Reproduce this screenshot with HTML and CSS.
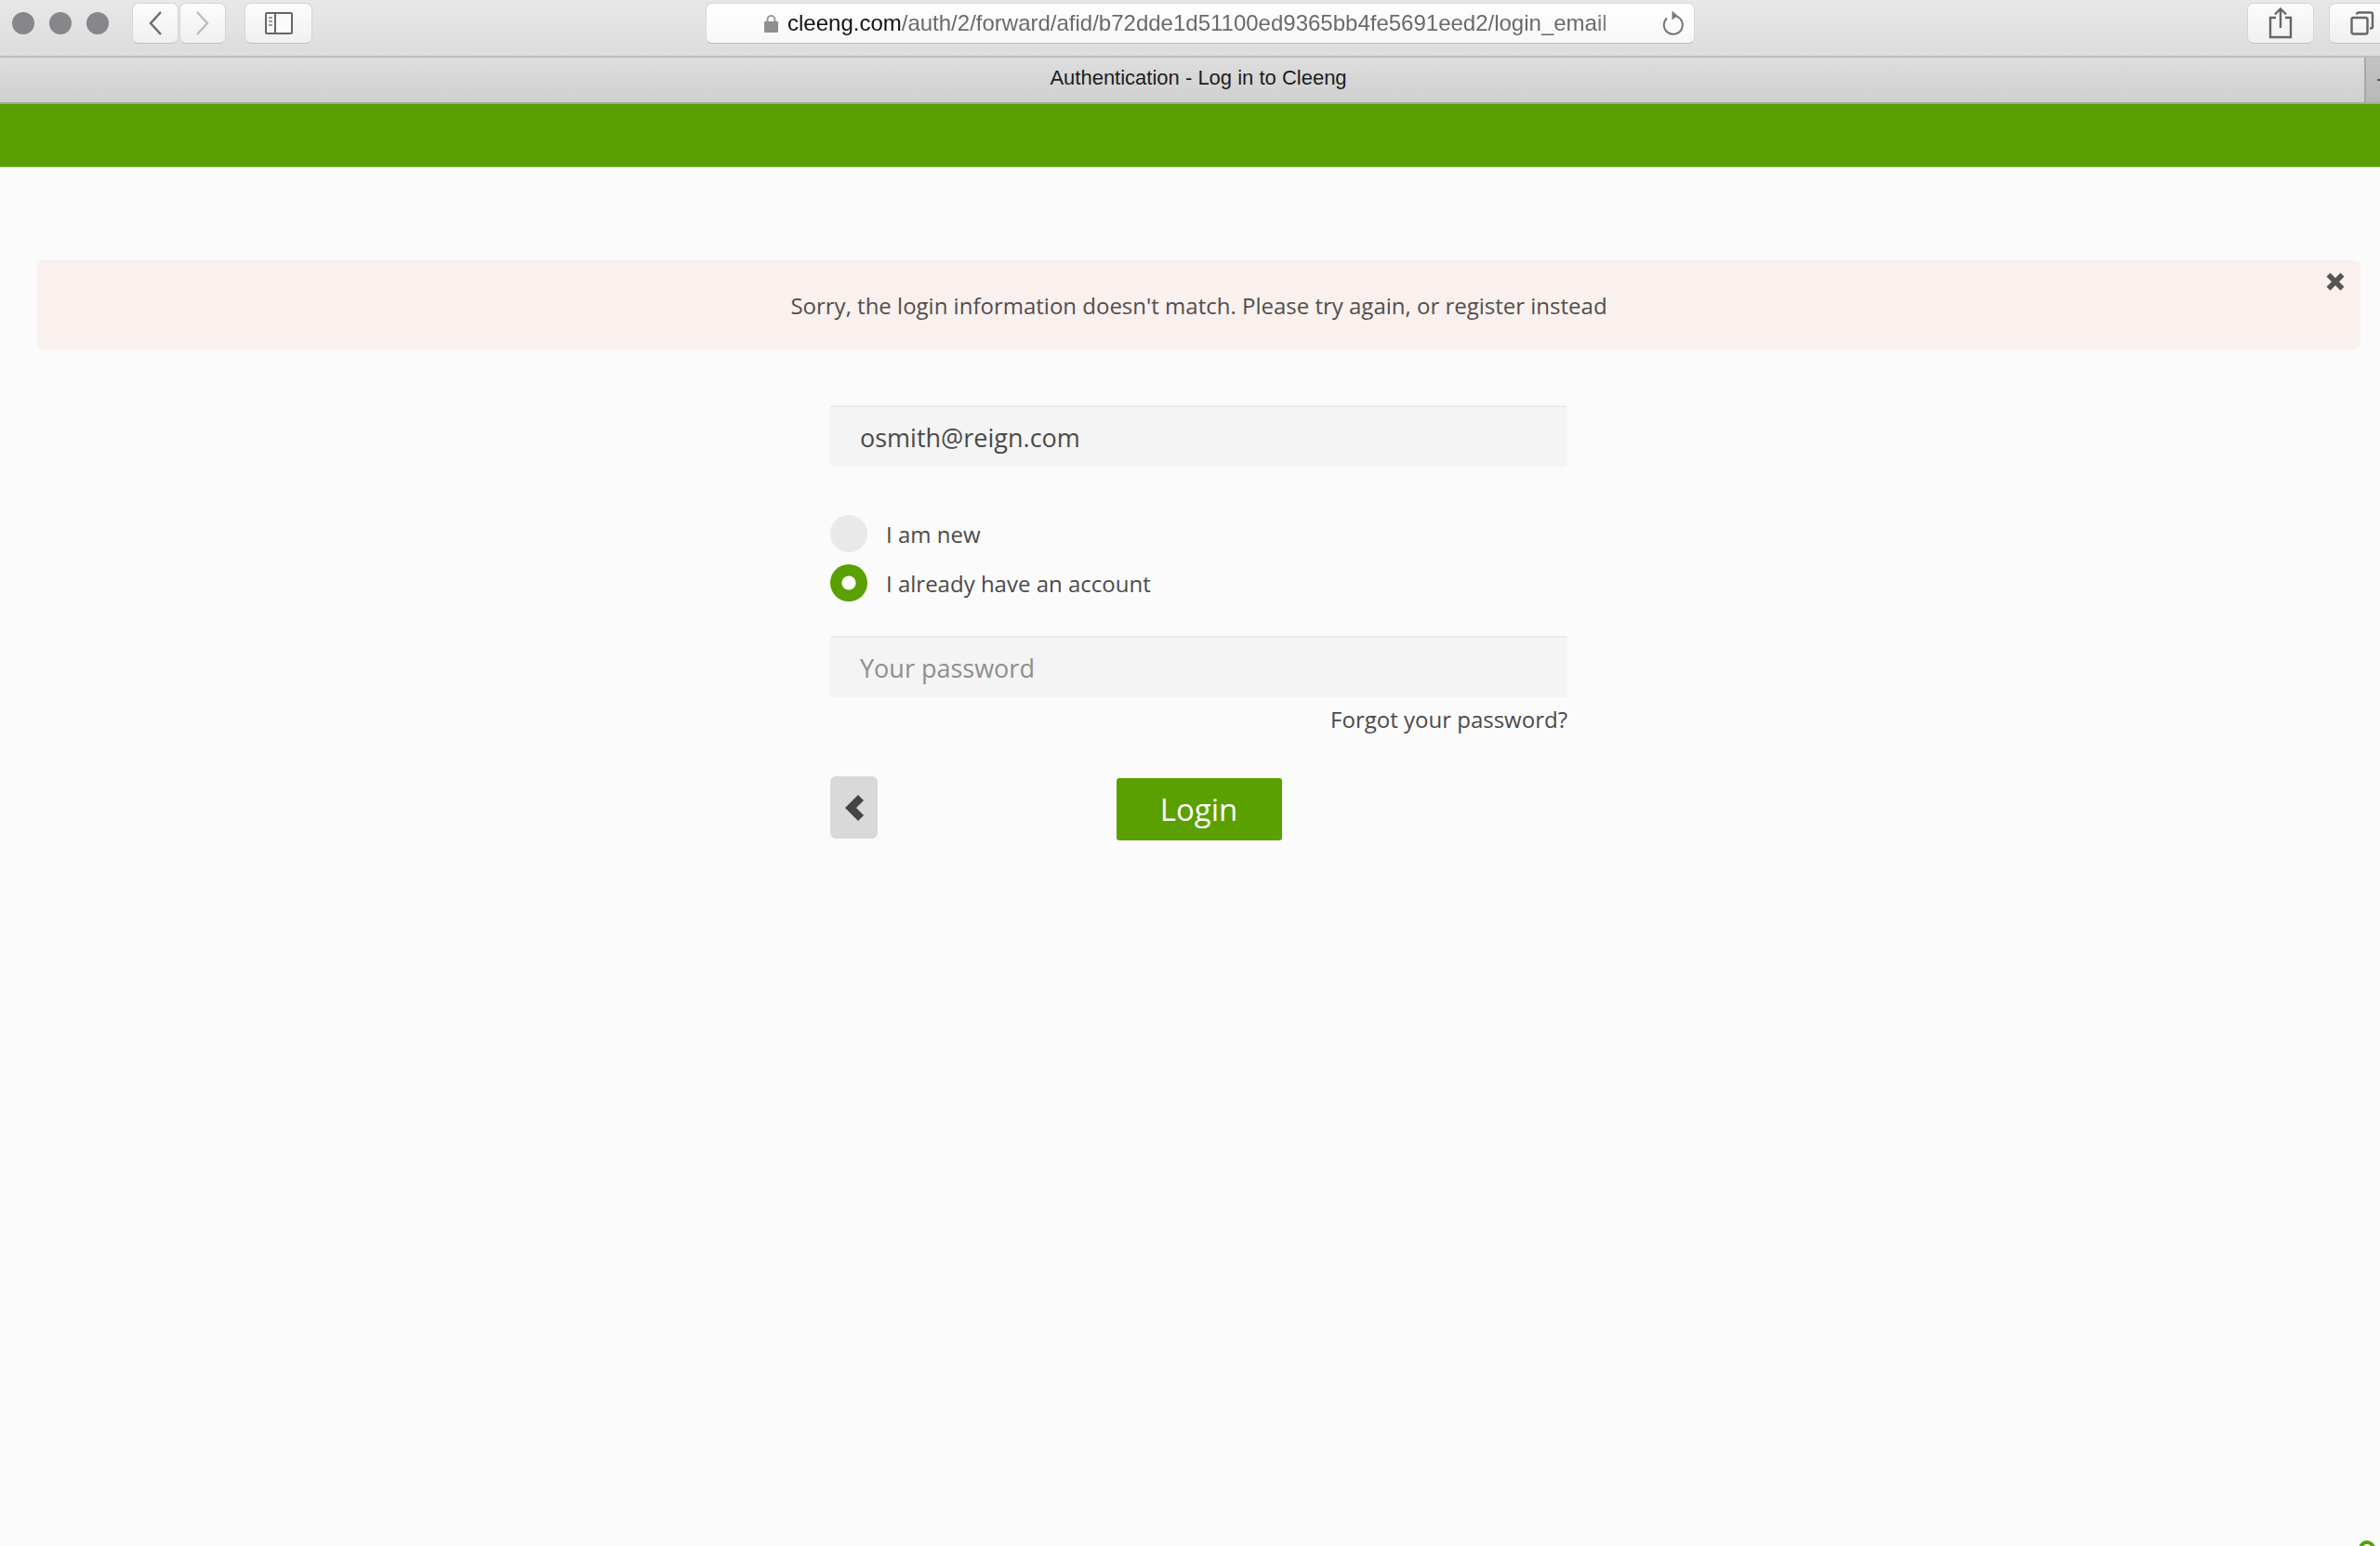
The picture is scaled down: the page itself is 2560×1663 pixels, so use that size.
FILE: index.html
```html
<!DOCTYPE html>
<html lang="en">
<head>
<meta charset="utf-8">
<title>Authentication - Log in to Cleeng</title>
<link rel="stylesheet" href="styles.css">
</head>
<body>
<header class="toolbar">
  <div class="lights"><span class="light"></span><span class="light"></span><span class="light"></span></div>
  <div class="nav-pair">
    <button class="tool tool-nav"><svg width="16" height="28" viewBox="0 0 16 28"><path d="M14 2 3 14l11 12" fill="none" stroke="#6b6b6b" stroke-width="2.4"/></svg></button>
    <button class="tool tool-nav"><svg width="16" height="28" viewBox="0 0 16 28"><path d="m2 2 11 12L2 26" fill="none" stroke="#bdbdbd" stroke-width="2.4"/></svg></button>
  </div>
  <button class="tool tool-side"><svg width="30" height="24" viewBox="0 0 30 24"><rect x="1" y="1" width="28" height="22" rx="1" fill="#fbfbfb" stroke="#666" stroke-width="2"/><path d="M11 1v22" stroke="#666" stroke-width="2"/><path d="M4 6h4M4 10h4M4 14h4" stroke="#999" stroke-width="2"/></svg></button>
  <div class="url">
    <svg class="lock" width="15" height="20" viewBox="0 0 15 20"><path d="M3.5 9V6a4 4 0 0 1 8 0v3" fill="none" stroke="#9a9a9a" stroke-width="2"/><rect y="8" width="15" height="12" rx="1" fill="#8f8f8f"/></svg>
    <div class="url-text"><span class="domain">cleeng.com</span>/auth/2/forward/afid/b72dde1d51100ed9365bb4fe5691eed2/login_email</div>
    <svg class="reload" width="24" height="30" viewBox="0 0 24 30"><path d="M15.5 7.2A10 10 0 1 1 6 9.5" fill="none" stroke="#777" stroke-width="2"/><path d="M11.5 1.5 17.5 7l-6 4.500z" fill="#777"/></svg>
  </div>
  <button class="tool tool-share"><svg width="26" height="34" viewBox="0 0 26 34"><path d="M8 11H2v21h22V11h-6" fill="none" stroke="#666" stroke-width="2.400"/><path d="M13 22V2M7 7.500l6-6 6 6" fill="none" stroke="#666" stroke-width="2.400"/></svg></button>
  <button class="tool tool-tabs"><svg width="26" height="26" viewBox="0 0 26 26"><rect x="1.500" y="7" width="17" height="17.500" rx="2" fill="none" stroke="#666" stroke-width="2.400"/><path d="M7 3.500q0-2 2-2h13q2 0 2 2v13q0 2-2 2h-1" fill="none" stroke="#666" stroke-width="2.400"/></svg></button>
</header>
<div class="tabbar">
  <div class="tab-title">Authentication - Log in to Cleeng</div>
  <div class="tab-new"><span class="plus"></span></div>
</div>
<div class="brand-bar"></div>
<main class="content">
  <div class="alert">
    <p class="alert-text">Sorry, the login information doesn't match. Please try again, or register instead</p>
    <svg class="alert-close" width="20" height="20" viewBox="0 0 20 20"><path d="M4.500 0.500 10 6l5.500-5.500 4 4L14 10l5.500 5.500-4 4L10 14l-5.500 5.500-4-4L6 10 0.500 4.500z" fill="#555"/></svg>
  </div>
  <form class="form">
    <input class="field" type="text" value="osmith@reign.com">
    <div class="radios">
      <label class="radio"><span class="dot"></span>I am new</label>
      <label class="radio"><span class="dot dot-on"></span>I already have an account</label>
    </div>
    <input class="field" type="password" placeholder="Your password">
    <a class="forgot">Forgot your password?</a>
    <div class="actions">
      <button type="button" class="back"><svg width="20" height="28" viewBox="0 0 20 28"><path d="M14 0 20 6l-8 8 8 8-6 6L0 14z" fill="#444"/></svg></button>
      <button type="button" class="login">Login</button>
    </div>
  </form>
</main>
<div class="help-ring"></div>
</body>
</html>
```
FILE: styles.css
```css
* { box-sizing: border-box; }
html, body { margin: 0; height: 100%; }
body {
  position: relative;
  height: 1663px;
  overflow: hidden;
  background: #fbfbfb;
  font-family: "Open Sans", sans-serif;
  color: #4a4a4a;
}
button { padding: 0; font: inherit; cursor: pointer; }

.toolbar {
  height: 62px;
  display: flex;
  align-items: flex-start;
  padding: 3px 0 0 13px;
  background: linear-gradient(#e8e8e8, #dcdcdc);
  border-bottom: 2px solid #bdbdbd;
  overflow: hidden;
}
.lights { display: flex; gap: 16px; margin-top: 10px; }
.light { width: 24px; height: 24px; border-radius: 50%; background: #87878b; }
.nav-pair { display: flex; gap: 1px; margin-left: 25px; }
.tool {
  height: 44px;
  display: flex;
  align-items: center;
  justify-content: center;
  background: linear-gradient(#fcfcfc, #f0f0f0);
  border: 1px solid #d6d6d6;
  border-bottom-color: #c2c2c2;
  border-radius: 7px;
  flex: none;
}
.tool-nav { width: 50px; }
.tool-side { width: 73px; margin-left: 20px; }
.url {
  width: 1064px;
  height: 44px;
  margin-left: 423px;
  flex: none;
  display: flex;
  align-items: center;
  padding-left: 62px;
  background: linear-gradient(#ffffff, #f7f7f7);
  border: 1px solid #d8d8d8;
  border-bottom-color: #bcbcbc;
  border-radius: 7px;
}
.lock { flex: none; }
.url-text {
  width: 916px;
  margin-left: 10px;
  font-family: "Liberation Sans", sans-serif;
  font-size: 24px;
  line-height: 30px;
  color: #6a6a6a;
  white-space: nowrap;
  overflow: hidden;
  -webkit-mask-image: linear-gradient(to right, #000 95%, transparent);
  mask-image: linear-gradient(to right, #000 95%, transparent);
}
.domain { color: #111; }
.reload { flex: none; margin-left: 24px; }
.tool-share { width: 72px; margin-left: 594px; }
.tool-tabs { width: 72px; margin-left: 16px; }

.tabbar {
  height: 50px;
  display: flex;
  background: linear-gradient(#dddddd, #d0d0d0);
  border-bottom: 2px solid #a6a6a6;
}
.tab-title {
  flex: 1;
  padding-left: 35px;
  text-align: center;
  font-family: "Liberation Sans", sans-serif;
  font-size: 22px;
  line-height: 44px;
  color: #1c1c1c;
}
.tab-new {
  width: 17px;
  display: flex;
  align-items: center;
  background: linear-gradient(#c4c4c4, #b8b8b8);
  border-left: 2px solid #a8a8a8;
}
.plus { width: 8px; height: 2px; margin-left: 12px; background: #555; }

.brand-bar { height: 68px; background: #5aa000; border-bottom: 1px solid #8dbf52; }

.content { padding: 100px 21px 0 40px; }
.alert {
  position: relative;
  height: 96px;
  display: flex;
  align-items: center;
  justify-content: center;
  background: #faf0ed;
  border-radius: 6px;
}
.alert-text { margin: 0; font-size: 24px; color: #4f4f4f; }
.alert-close { position: absolute; top: 13px; right: 17px; }

.form {
  width: 793px;
  margin: 60px auto 0;
  display: flex;
  flex-direction: column;
}
.field {
  display: block;
  width: 100%;
  height: 66px;
  padding: 0 32px;
  background: #f4f4f4;
  border: 0;
  border-top: 2px solid #ebebeb;
  border-radius: 4px;
  outline: 0;
  font: 27px "Open Sans", sans-serif;
  color: #4a4a4a;
}
.field::placeholder { color: #8e8e8e; opacity: 1; }
.radios {
  display: flex;
  flex-direction: column;
  gap: 13px;
  margin: 52px 0 37px;
}
.radio {
  display: flex;
  align-items: center;
  gap: 20px;
  height: 40px;
  font-size: 24px;
  color: #4a4a4a;
}
.dot { width: 40px; height: 40px; border-radius: 50%; background: #e9e9e9; flex: none; }
.dot-on { display: flex; background: radial-gradient(circle at center, #fff 0 7px, #5aa000 8px); }
.forgot {
  align-self: flex-end;
  margin-top: 6px;
  font-size: 24px;
  line-height: 36px;
  color: #4a4a4a;
}
.actions {
  position: relative;
  display: flex;
  justify-content: center;
  align-items: flex-start;
  margin-top: 43px;
  padding-top: 2px;
}
.back {
  position: absolute;
  left: 0;
  top: 0;
  width: 51px;
  height: 67px;
  display: flex;
  align-items: center;
  justify-content: center;
  padding-right: 0;
  background: #d9d9d9;
  border: 0;
  border-radius: 6px;
}
.login {
  width: 178px;
  height: 67px;
  background: #5aa000;
  border: 0;
  border-radius: 3px;
  font-size: 33px;
  color: #fff;
}
.help-ring {
  position: absolute;
  right: 5px;
  bottom: -12px;
  width: 18px;
  height: 18px;
  border: 4px solid #5aa000;
  border-radius: 50%;
}
```
